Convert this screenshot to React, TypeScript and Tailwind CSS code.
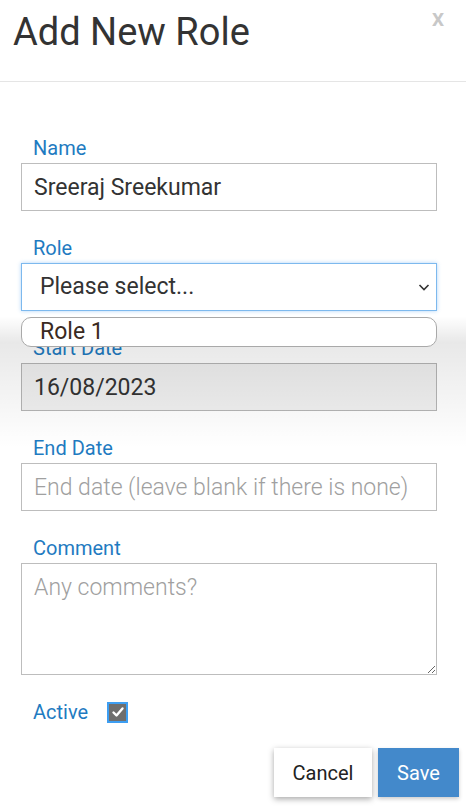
export default function App() {
  return (
    <div className="relative min-h-[812px] bg-white font-['Roboto','Liberation_Sans',sans-serif] text-[#333]">
      <div className="relative h-[82px] border-b border-[#e5e5e5]">
        <h1 className="pl-[13px] pt-[10px] text-[38px] leading-[44px] text-[#333]">Add New Role</h1>
        <button className="absolute right-[22px] top-[6px] text-[19px] font-bold text-[#c8c8c8]">X</button>
      </div>

      <form className="flex flex-col pl-[21px] pr-[29px] pt-[54px]">
        <Field label="Name">
          <input
            defaultValue="Sreeraj Sreekumar"
            className="h-[48px] w-full border border-[#bdbdbd] pl-[12px] text-[23px] text-[#333] outline-none"
          />
        </Field>

        <Field label="Role">
          <div className="flex h-[48px] w-full items-center justify-between border border-[#7db9ee] pl-[18px] pr-[5px] text-[23px] text-[#333] shadow-[0_0_4px_rgba(80,160,240,0.45)]">
            <span>Please select...</span>
            <svg className="h-[14px] w-[14px]" viewBox="0 0 14 14" fill="none" stroke="#333" strokeWidth="1.6">
              <path d="M2.5 5l4.5 4.5L11.5 5" />
            </svg>
          </div>
        </Field>

        <Field label="Start Date">
          <input
            defaultValue="16/08/2023"
            disabled
            className="h-[48px] w-full border border-[#b5b5b5] bg-[#f0f0f0] pl-[12px] text-[23px] text-[#333] outline-none"
          />
        </Field>

        <Field label="End Date">
          <input
            placeholder="End date (leave blank if there is none)"
            className="h-[48px] w-full border border-[#bdbdbd] pl-[12px] text-[23px] text-[#333] outline-none placeholder:font-light placeholder:text-[#a0a0a0]"
          />
        </Field>

        <Field label="Comment">
          <textarea
            placeholder="Any comments?"
            className="block h-[112px] w-full border border-[#bdbdbd] pl-[12px] pt-[10px] text-[23px] leading-[28px] text-[#333] outline-none placeholder:font-light placeholder:text-[#a0a0a0]"
          />
        </Field>

        <div className="flex items-center gap-[19px] pl-[12px]">
          <span className="text-[20px] leading-[24px] text-[#1f7bc1]">Active</span>
          <span className="flex h-[21px] w-[21px] items-center justify-center border-2 border-[#3d9ef2] bg-[#6e6e6e]">
            <svg className="h-[14px] w-[14px]" viewBox="0 0 14 14" fill="none" stroke="white" strokeWidth="2.4" strokeLinecap="round" strokeLinejoin="round">
              <path d="M2.5 7.5l3 3 6-7" />
            </svg>
          </span>
        </div>
      </form>

      <div className="mt-[24px] flex justify-end gap-[6px] pr-[7px]">
        <button className="h-[49px] w-[98px] bg-white text-[20px] text-[#222] shadow-[0_2px_6px_rgba(0,0,0,0.35)]">Cancel</button>
        <button className="h-[49px] w-[81px] bg-[#4389cb] text-[20px] text-white shadow-[0_2px_4px_rgba(0,0,0,0.2)]">Save</button>
      </div>

      <div className="pointer-events-none absolute left-0 right-0 top-[316px] h-[132px] bg-linear-to-b from-transparent via-black/9 via-20% to-transparent" />
      <div className="absolute left-[21px] right-[29px] top-[317px] flex h-[30px] items-center rounded-[10px] border border-[#a9a9a9] bg-white pl-[18px] text-[23px] text-[#3a2a22]">
        Role 1
      </div>
    </div>
  );
}

function Field({ label, children }: { label: string; children: React.ReactNode }) {
  return (
    <div className="mb-[25px] flex flex-col gap-[3px]">
      <label className="pl-[12px] text-[20px] leading-[24px] text-[#1f7bc1]">{label}</label>
      {children}
    </div>
  );
}
